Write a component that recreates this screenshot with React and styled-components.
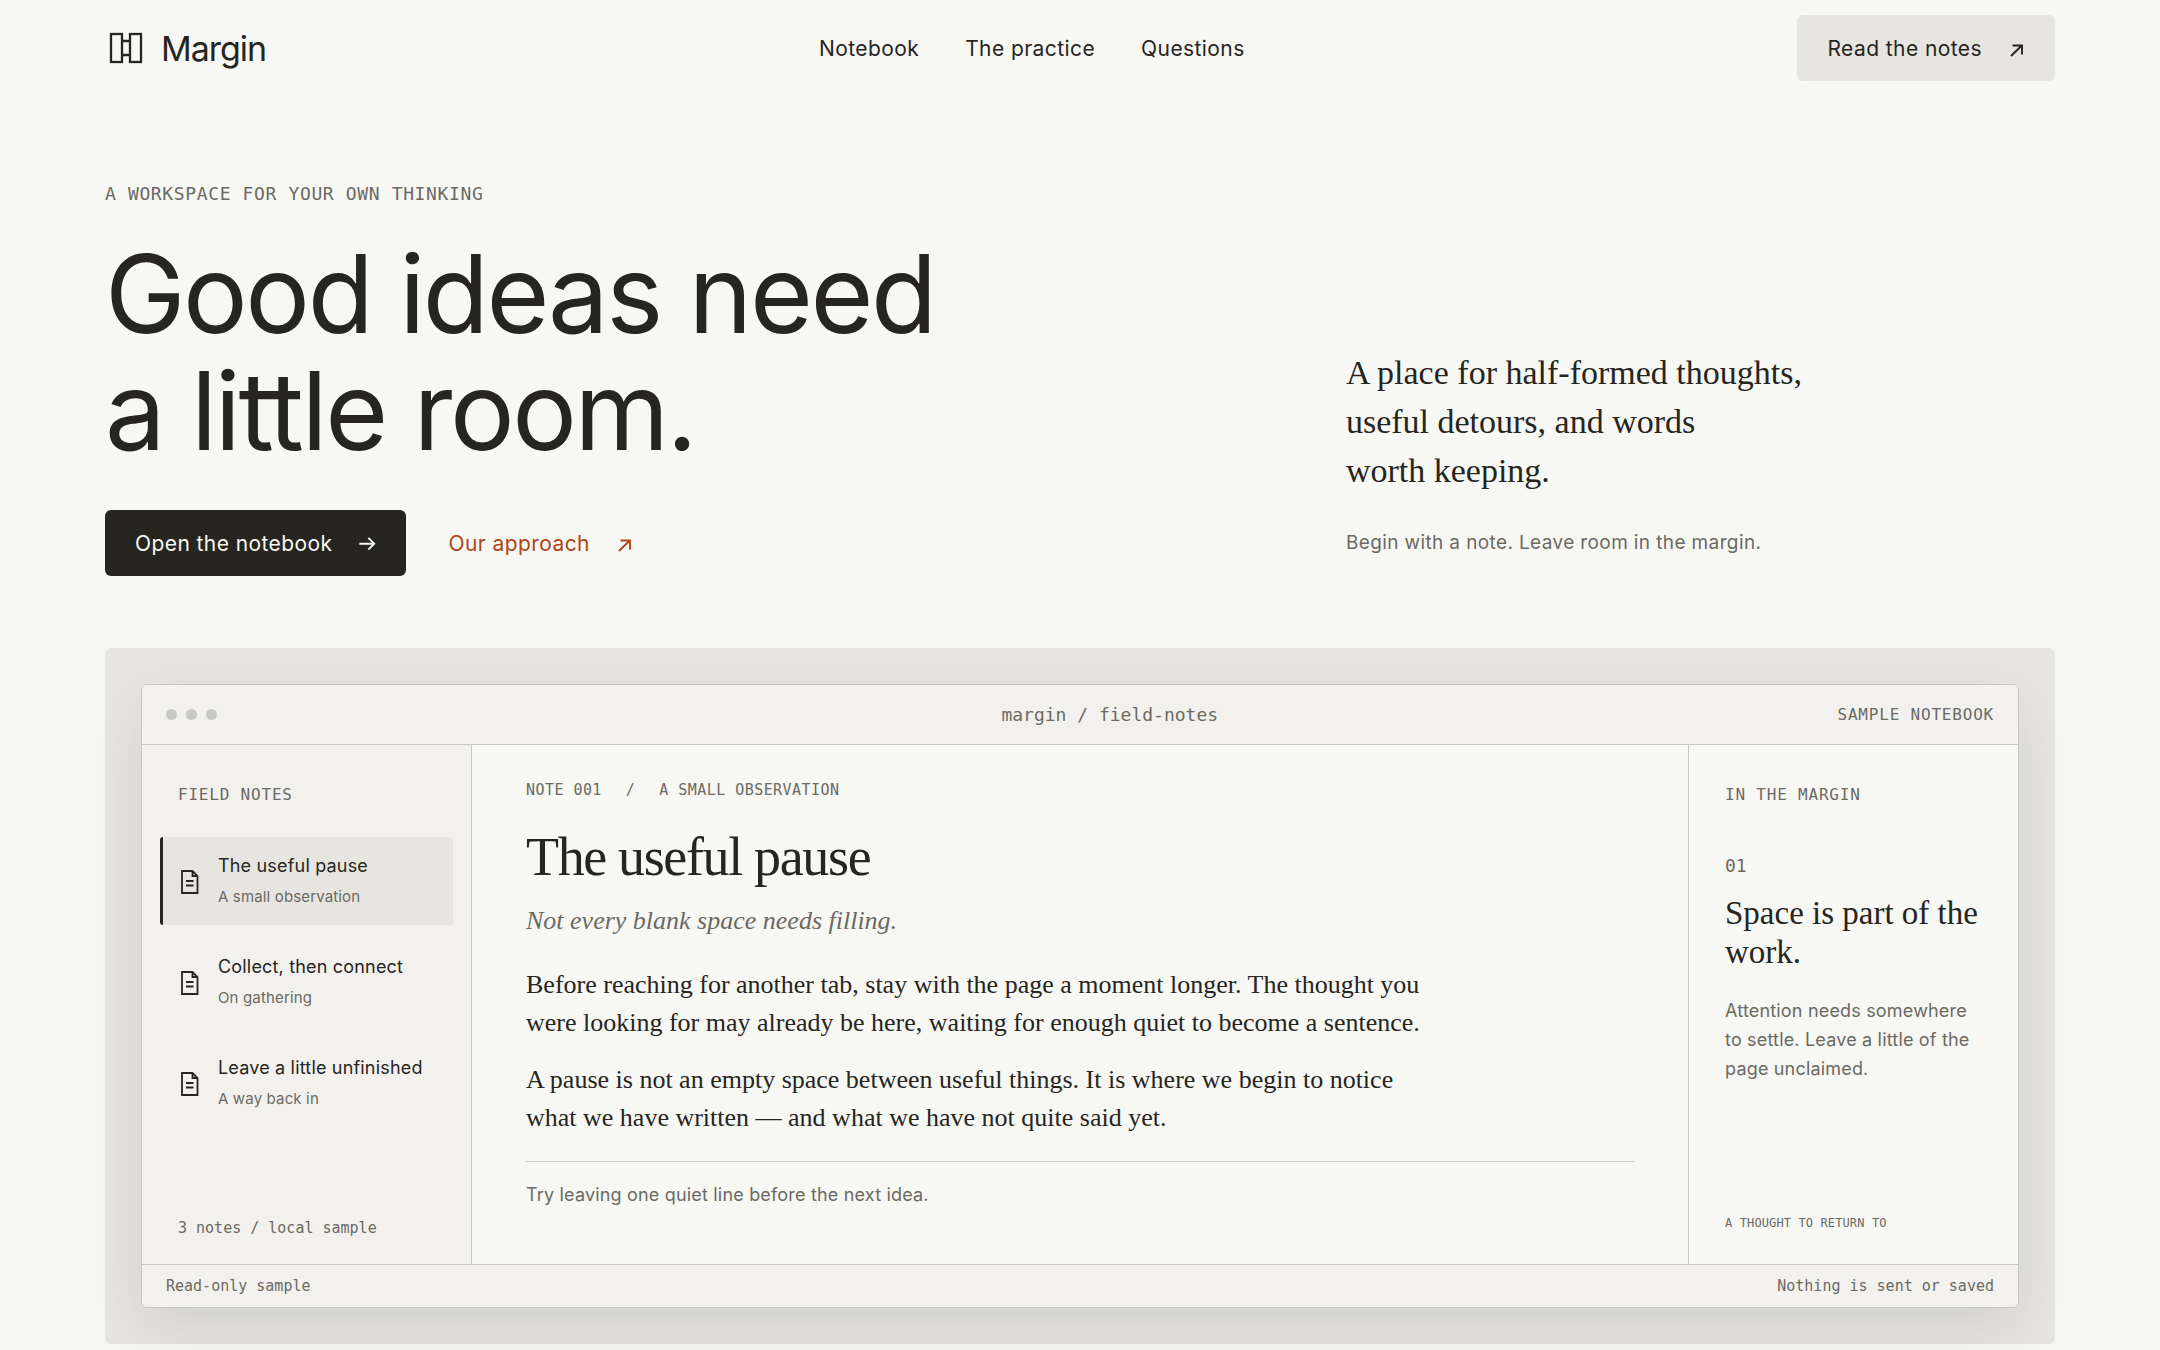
import React from 'react';
import styled, { createGlobalStyle } from 'styled-components';

const sans = `Inter, "Liberation Sans", sans-serif`;
const serif = `"Liberation Serif", "Times New Roman", serif`;
const mono = `"DejaVu Sans Mono", "Liberation Mono", monospace`;

const ink = '#26251e';
const muted = '#6b6a63';
const paper = '#f7f7f4';
const surface = '#f2f1ed';
const stone = '#e6e5e0';
const line = '#c9c9c4';
const rust = '#ad4618';

const GlobalStyle = createGlobalStyle`
    *, *::before, *::after {
        box-sizing: border-box;
    }
    body {
        margin: 0;
        background: ${paper};
        color: ${ink};
        font-family: ${sans};
    }
    h1, h2, h3, p, ul {
        margin: 0;
        padding: 0;
        font-weight: 400;
    }
    a {
        color: inherit;
        text-decoration: none;
    }
`;

const Page = styled.div`
    padding: 0 105px 6px;
`;
const Header = styled.header`
    display: flex;
    align-items: center;
    justify-content: space-between;
    height: 96px;
`;
const Brand = styled.a`
    display: flex;
    align-items: center;
    gap: 14px;
    font-size: 34px;
    letter-spacing: -0.03em;
`;
const Nav = styled.nav`
    display: flex;
    gap: 46px;
    padding-top: 2px;
    font-size: 21px;
    line-height: 30px;
    letter-spacing: 0.02em;
`;
const Action = styled.a`
    display: inline-flex;
    align-items: center;
    gap: 25px;
    height: 66px;
    padding: 0 ${props => (props.$plain ? '0' : '30px')};
    border-radius: 6px;
    font-size: 21px;
    letter-spacing: 0.02em;
    white-space: nowrap;
    color: ${props => props.$color || ink};
    background: ${props => props.$fill || 'transparent'};
`;
const Hero = styled.section`
    display: grid;
    grid-template-columns: 7fr 4fr;
    align-items: end;
    padding: 86px 0 72px;
`;
const Label = styled.p`
    font-family: ${mono};
    font-size: ${props => props.$size || 16}px;
    line-height: 24px;
    letter-spacing: 0.05em;
    text-transform: uppercase;
    color: ${muted};
`;
const Eyebrow = styled(Label)`
    letter-spacing: 0.035em;
`;
const Headline = styled.h1`
    margin-top: 29px;
    font-size: 108px;
    line-height: 117px;
    letter-spacing: -0.023em;
`;
const Actions = styled.div`
    display: flex;
    gap: 43px;
    margin-top: 41px;
`;
const Lead = styled.p`
    font-family: ${serif};
    font-size: 34px;
    line-height: 49px;
`;
const Aside = styled.p`
    margin: 33px 0 18px;
    font-size: 19px;
    line-height: 30px;
    letter-spacing: 0.02em;
    color: ${muted};
`;
const Stage = styled.section`
    padding: 36px;
    border-radius: 6px;
    background: ${stone};
`;
const Window = styled.div`
    border: 1px solid ${line};
    border-radius: 6px;
    overflow: hidden;
    background: ${paper};
    box-shadow: 0 24px 60px rgba(38, 37, 30, 0.1);
`;
const TitleBar = styled.div`
    display: flex;
    align-items: center;
    height: 60px;
    padding: 0 24px;
    border-bottom: 1px solid ${line};
    background: ${surface};
    font-family: ${mono};
    font-size: 18px;
    color: ${muted};
`;
const Dots = styled.div`
    display: flex;
    flex: 0 0 216px;
    gap: 9px;
`;
const Dot = styled.span`
    width: 11px;
    height: 11px;
    border-radius: 50%;
    background: ${line};
`;
const Path = styled.span`
    flex: 1;
    text-align: center;
`;
const Columns = styled.div`
    display: grid;
    grid-template-columns: 330px 1fr 330px;
`;
const Sidebar = styled.aside`
    display: flex;
    flex-direction: column;
    padding: 38px 18px 24px;
    border-right: 1px solid ${line};
    background: ${surface};
`;
const SidebarTitle = styled(Label)`
    padding-left: 18px;
`;
const NoteList = styled.ul`
    display: grid;
    gap: 13px;
    margin-top: 30px;
    list-style: none;
`;
const NoteLink = styled.a`
    display: flex;
    align-items: center;
    gap: 16px;
    height: 88px;
    padding: 2px 0 0 15px;
    border-left: 3px solid ${props => (props.$active ? ink : 'transparent')};
    border-radius: 3px;
    background: ${props => (props.$active ? stone : 'transparent')};
`;
const NoteName = styled.span`
    display: block;
    font-size: 18px;
    line-height: 30px;
    letter-spacing: 0.01em;
`;
const NoteKind = styled.span`
    display: block;
    font-size: 15px;
    line-height: 32px;
    letter-spacing: 0.01em;
    color: ${muted};
`;
const Count = styled.p`
    margin-top: auto;
    padding-left: 18px;
    font-family: ${mono};
    font-size: 15px;
    line-height: 24px;
    color: ${muted};
`;
const Note = styled.article`
    padding: 33px 54px 54px;
`;
const Crumbs = styled(Label)`
    display: flex;
    gap: 24px;
    letter-spacing: 0.03em;
`;
const NoteTitle = styled.h2`
    margin-top: 23px;
    font-family: ${serif};
    font-size: 54px;
    line-height: 64px;
    letter-spacing: -0.025em;
`;
const Subtitle = styled.p`
    margin: 14px 0 27px;
    font-family: ${serif};
    font-size: 26px;
    font-style: italic;
    line-height: 36px;
    color: ${muted};
`;
const Paragraph = styled.p`
    max-width: 900px;
    margin-bottom: 19px;
    font-family: ${serif};
    font-size: 26px;
    line-height: 38px;
`;
const Prompt = styled.p`
    margin-top: 24px;
    padding-top: 18px;
    border-top: 1px solid ${line};
    font-size: 18px;
    line-height: 30px;
    letter-spacing: 0.01em;
    color: ${muted};
`;
const Margin = styled.aside`
    display: flex;
    flex-direction: column;
    padding: 38px 36px 29px;
    border-left: 1px solid ${line};
`;
const Index = styled.p`
    margin-top: 47px;
    font-family: ${mono};
    font-size: 18px;
    line-height: 24px;
    color: ${muted};
`;
const MarginTitle = styled.h3`
    margin-top: 16px;
    font-family: ${serif};
    font-size: 33px;
    line-height: 39px;
`;
const MarginText = styled.p`
    margin-top: 24px;
    font-size: 18px;
    line-height: 29px;
    letter-spacing: 0.01em;
    color: ${muted};
`;
const Reminder = styled(Label)`
    margin-top: auto;
    letter-spacing: 0.01em;
`;
const StatusBar = styled.footer`
    display: flex;
    align-items: center;
    justify-content: space-between;
    height: 43px;
    padding: 0 24px;
    border-top: 1px solid ${line};
    background: ${surface};
    font-family: ${mono};
    font-size: 15px;
    color: ${muted};
`;

const Logo = () => (
    <svg width="42" height="42" viewBox="0 0 42 42" fill="none" stroke="currentColor" strokeWidth="2.3" aria-hidden="true">
        <rect x="6" y="7" width="11" height="28" />
        <rect x="25" y="7" width="11" height="28" />
        <path d="M17 14h8M17 28h8" />
    </svg>
);

const ArrowRight = () => (
    <svg width="18" height="18" viewBox="0 0 18 18" fill="none" stroke="currentColor" strokeWidth="1.9" aria-hidden="true">
        <path d="M1.300 9.700H16M10.300 3.800l5.900 5.900-5.900 5.900" />
    </svg>
);

const ArrowOut = () => (
    <svg width="18" height="18" viewBox="0 0 18 18" fill="none" stroke="currentColor" strokeWidth="1.9" aria-hidden="true">
        <path d="M4 17L14.800 6.500M5.500 6.500H15v9" />
    </svg>
);

const DocIcon = () => (
    <svg width="24" height="26" viewBox="0 0 24 26" fill="none" stroke="currentColor" strokeWidth="1.8" aria-hidden="true">
        <path d="M4 2h10.500l5 5v17H4zM14.500 2v5h5M8 12h7.500M8 16.500h7.500" />
    </svg>
);

const notes = [
    { name: 'The useful pause', kind: 'A small observation' },
    { name: 'Collect, then connect', kind: 'On gathering' },
    { name: 'Leave a little unfinished', kind: 'A way back in' },
];

function App() {
    return (
        <Page>
            <GlobalStyle />
            <Header>
                <Brand href="#top"><Logo />Margin</Brand>
                <Nav>
                    <a href="#notebook">Notebook</a>
                    <a href="#practice">The practice</a>
                    <a href="#questions">Questions</a>
                </Nav>
                <Action href="#notes" $fill={stone}>Read the notes<ArrowOut /></Action>
            </Header>
            <main>
                <Hero>
                    <div>
                        <Eyebrow $size={18}>A workspace for your own thinking</Eyebrow>
                        <Headline>Good ideas need<br />a little room.</Headline>
                        <Actions>
                            <Action href="#notebook" $fill={ink} $color={paper}>Open the notebook<ArrowRight /></Action>
                            <Action href="#practice" $plain $color={rust}>Our approach<ArrowOut /></Action>
                        </Actions>
                    </div>
                    <div>
                        <Lead>A place for half-formed thoughts,<br />useful detours, and words<br />worth keeping.</Lead>
                        <Aside>Begin with a note. Leave room in the margin.</Aside>
                    </div>
                </Hero>
                <Stage id="notebook">
                    <Window>
                        <TitleBar>
                            <Dots><Dot /><Dot /><Dot /></Dots>
                            <Path>margin / field-notes</Path>
                            <Label as="span">Sample notebook</Label>
                        </TitleBar>
                        <Columns>
                            <Sidebar>
                                <SidebarTitle>Field notes</SidebarTitle>
                                <NoteList>
                                    {notes.map((note, i) => (
                                        <li key={note.name}>
                                            <NoteLink href="#notebook" $active={i === 0}>
                                                <DocIcon />
                                                <span>
                                                    <NoteName>{note.name}</NoteName>
                                                    <NoteKind>{note.kind}</NoteKind>
                                                </span>
                                            </NoteLink>
                                        </li>
                                    ))}
                                </NoteList>
                                <Count>3 notes / local sample</Count>
                            </Sidebar>
                            <Note>
                                <Crumbs $size={15}><span>Note 001</span><span>/</span><span>A small observation</span></Crumbs>
                                <NoteTitle>The useful pause</NoteTitle>
                                <Subtitle>Not every blank space needs filling.</Subtitle>
                                <Paragraph>
                                    Before reaching for another tab, stay with the page a moment longer. The thought you
                                    were looking for may already be here, waiting for enough quiet to become a sentence.
                                </Paragraph>
                                <Paragraph>
                                    A pause is not an empty space between useful things. It is where we begin to notice
                                    what we have written — and what we have not quite said yet.
                                </Paragraph>
                                <Prompt>Try leaving one quiet line before the next idea.</Prompt>
                            </Note>
                            <Margin>
                                <Label>In the margin</Label>
                                <Index>01</Index>
                                <MarginTitle>Space is part of the work.</MarginTitle>
                                <MarginText>Attention needs somewhere to settle. Leave a little of the page unclaimed.</MarginText>
                                <Reminder $size={12}>A thought to return to</Reminder>
                            </Margin>
                        </Columns>
                        <StatusBar>
                            <span>Read-only sample</span>
                            <span>Nothing is sent or saved</span>
                        </StatusBar>
                    </Window>
                </Stage>
            </main>
        </Page>
    );
}

export default App;
